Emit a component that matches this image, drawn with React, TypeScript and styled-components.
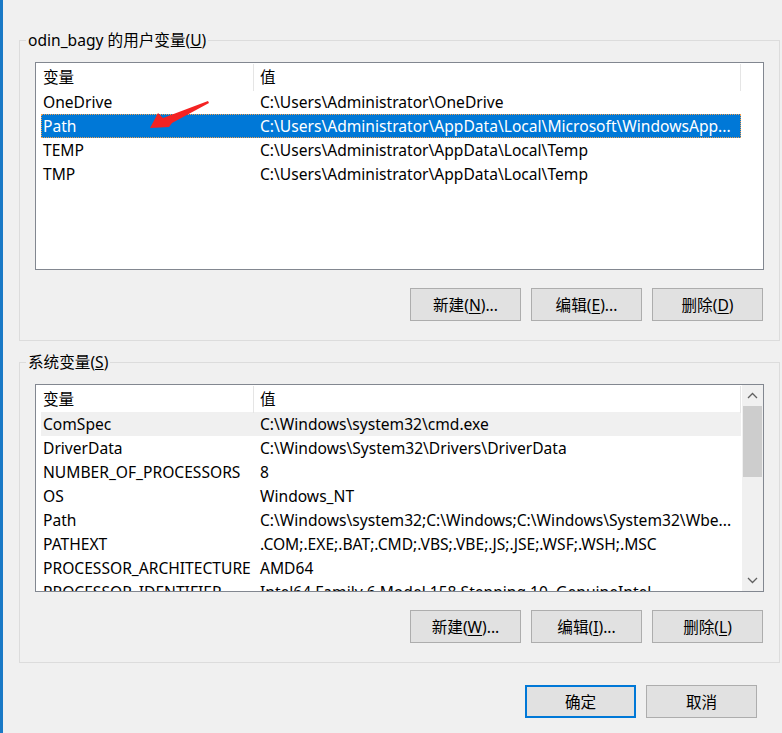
import React from 'react'
import styled, { createGlobalStyle } from 'styled-components'

const GlobalStyle = createGlobalStyle`
  html, body {
    margin: 0;
    padding: 0;
    background: #f0f0f0;
  }
  body {
    font-family: "Noto Sans", "Noto Sans CJK SC", sans-serif;
    font-size: 15.6px;
    color: #000;
  }
`

type Variable = { name: string; value: string }

const userVars: Variable[] = [
  { name: 'OneDrive', value: 'C:\\Users\\Administrator\\OneDrive' },
  { name: 'Path', value: 'C:\\Users\\Administrator\\AppData\\Local\\Microsoft\\WindowsApp...' },
  { name: 'TEMP', value: 'C:\\Users\\Administrator\\AppData\\Local\\Temp' },
  { name: 'TMP', value: 'C:\\Users\\Administrator\\AppData\\Local\\Temp' },
]

const systemVars: Variable[] = [
  { name: 'ComSpec', value: 'C:\\Windows\\system32\\cmd.exe' },
  { name: 'DriverData', value: 'C:\\Windows\\System32\\Drivers\\DriverData' },
  { name: 'NUMBER_OF_PROCESSORS', value: '8' },
  { name: 'OS', value: 'Windows_NT' },
  { name: 'Path', value: 'C:\\Windows\\system32;C:\\Windows;C:\\Windows\\System32\\Wbe...' },
  { name: 'PATHEXT', value: '.COM;.EXE;.BAT;.CMD;.VBS;.VBE;.JS;.JSE;.WSF;.WSH;.MSC' },
  { name: 'PROCESSOR_ARCHITECTURE', value: 'AMD64' },
  { name: 'PROCESSOR_IDENTIFIER', value: 'Intel64 Family 6 Model 158 Stepping 10, GenuineIntel' },
]

const App: React.FC = () => {
  return (
    <>
      <GlobalStyle />
      <StyledWindow>
        <StyledEdge />
        <StyledDialog>
          <StyledGroup>
            <StyledLegend>
              odin_bagy 的用户变量(<u>U</u>)
            </StyledLegend>
            <StyledGroupBody>
              <StyledList>
                <StyledListContent>
                  <VarTable vars={userVars} selected={1} />
                </StyledListContent>
              </StyledList>
              <StyledButtonRow>
                <StyledButton>新建(<u>N</u>)...</StyledButton>
                <StyledButton>编辑(<u>E</u>)...</StyledButton>
                <StyledButton>删除(<u>D</u>)</StyledButton>
              </StyledButtonRow>
            </StyledGroupBody>
          </StyledGroup>

          <StyledGroup $gap={11}>
            <StyledLegend>
              系统变量(<u>S</u>)
            </StyledLegend>
            <StyledGroupBody>
              <StyledList>
                <StyledListContent>
                  <VarTable vars={systemVars} hovered={0} />
                </StyledListContent>
                <StyledScrollbar>
                  <StyledScrollArrow>
                    <svg width="11" height="7" viewBox="0 0 11 7">
                      <polyline points="1,6 5.5,1.5 10,6" fill="none" stroke="#606060" strokeWidth="1.3" />
                    </svg>
                  </StyledScrollArrow>
                  <StyledScrollTrack>
                    <StyledThumb />
                  </StyledScrollTrack>
                  <StyledScrollArrow>
                    <svg width="11" height="7" viewBox="0 0 11 7">
                      <polyline points="1,1 5.5,5.5 10,1" fill="none" stroke="#606060" strokeWidth="1.3" />
                    </svg>
                  </StyledScrollArrow>
                </StyledScrollbar>
              </StyledList>
              <StyledButtonRow>
                <StyledButton>新建(<u>W</u>)...</StyledButton>
                <StyledButton>编辑(<u>I</u>)...</StyledButton>
                <StyledButton>删除(<u>L</u>)</StyledButton>
              </StyledButtonRow>
            </StyledGroupBody>
          </StyledGroup>

          <StyledFooter>
            <StyledButton $primary>确定</StyledButton>
            <StyledButton>取消</StyledButton>
          </StyledFooter>
        </StyledDialog>

        <StyledArrow width="70" height="40" viewBox="0 0 70 40">
          <polygon points="5,33 13,18 18,23 63,6 64,8 27,28 24,32" fill="#f42222" />
        </StyledArrow>
      </StyledWindow>
    </>
  )
}

const VarTable: React.FC<{ vars: Variable[]; selected?: number; hovered?: number }> = ({
  vars,
  selected,
  hovered,
}) => (
  <StyledTable>
    <StyledHeader>
      <StyledHeadCell>变量</StyledHeadCell>
      <StyledHeadCell $value>值</StyledHeadCell>
    </StyledHeader>
    {vars.map((v, i) => (
      <StyledRow key={v.name + i} $selected={i === selected} $hovered={i === hovered}>
        <StyledCell>{v.name}</StyledCell>
        <StyledCell $value>{v.value}</StyledCell>
      </StyledRow>
    ))}
  </StyledTable>
)

const StyledWindow = styled.div`
  position: relative;
  display: flex;
  width: 782px;
  height: 733px;
  overflow: hidden;
  background: #f0f0f0;
`

const StyledEdge = styled.div`
  width: 3px;
  flex-shrink: 0;
  background: #1a79c6;
`

const StyledDialog = styled.div`
  flex: 1;
  display: flex;
  flex-direction: column;
  padding: 30px 2px 0 16px;
`

const StyledGroup = styled.fieldset<{ $gap?: number }>`
  margin: ${props => props.$gap || 0}px 0 0 0;
  padding: 0;
  min-width: 0;
  border: 1px solid #dcdcdc;
`

const StyledLegend = styled.legend`
  margin-left: 6px;
  padding: 1px 2px 0 2px;
  height: 20px;
  box-sizing: border-box;
  line-height: 19px;
  white-space: nowrap;
`

const StyledGroupBody = styled.div`
  padding: 12px 15px 19px 15px;
`

const StyledList = styled.div`
  display: flex;
  height: 208px;
  box-sizing: border-box;
  border: 1px solid #828790;
  background: #fff;
  overflow: hidden;
`

const StyledListContent = styled.div`
  flex: 1;
  min-width: 0;
  padding-left: 5px;
  overflow: hidden;
`

const StyledTable = styled.div`
  width: 700px;
`

const StyledHeader = styled.div`
  display: grid;
  grid-template-columns: 213px 487px;
  height: 27px;
`

const StyledHeadCell = styled.div<{ $value?: boolean }>`
  box-sizing: border-box;
  padding-left: ${props => (props.$value ? 6 : 2)}px;
  margin-top: 1px;
  line-height: 27px;
  border-right: 1px solid #e5e5e5;
`

const StyledRow = styled.div<{ $selected?: boolean; $hovered?: boolean }>`
  display: grid;
  grid-template-columns: 213px 486px;
  height: 24px;
  box-sizing: border-box;
  border: 1px dotted ${props => (props.$selected ? '#f0a050' : 'transparent')};
  background: ${props => (props.$selected ? '#0078d7' : props.$hovered ? '#f0f0f0' : 'transparent')};
  color: ${props => (props.$selected ? '#fff' : '#000')};
`

const StyledCell = styled.div<{ $value?: boolean }>`
  padding-left: ${props => (props.$value ? 5 : 1)}px;
  line-height: 23px;
  height: 22px;
  white-space: nowrap;
  overflow: visible;
  text-overflow: clip;
`

const StyledScrollbar = styled.div`
  width: 21px;
  flex-shrink: 0;
  display: flex;
  flex-direction: column;
  background: #f0f0f0;
`

const StyledScrollArrow = styled.div`
  height: 21px;
  display: flex;
  align-items: center;
  justify-content: center;
`

const StyledScrollTrack = styled.div`
  flex: 1;
  padding: 0 1px;
`

const StyledThumb = styled.div`
  height: 71px;
  background: #cdcdcd;
`

const StyledButtonRow = styled.div`
  display: flex;
  justify-content: flex-end;
  gap: 10px;
  margin-top: 18px;
  padding-right: 1px;
`

const StyledButton = styled.button<{ $primary?: boolean }>`
  width: 111px;
  height: 33px;
  box-sizing: border-box;
  padding: 0;
  font-family: inherit;
  font-size: 15.6px;
  color: #000;
  background: #e1e1e1;
  border: ${props => (props.$primary ? '2px solid #0078d7' : '1px solid #adadad')};
  u {
    text-underline-offset: 2px;
  }
`

const StyledFooter = styled.div`
  display: flex;
  justify-content: flex-end;
  gap: 10px;
  margin-top: 22px;
  padding-right: 23px;
`

const StyledArrow = styled.svg`
  position: absolute;
  left: 145px;
  top: 95px;
  pointer-events: none;
`

export default App
